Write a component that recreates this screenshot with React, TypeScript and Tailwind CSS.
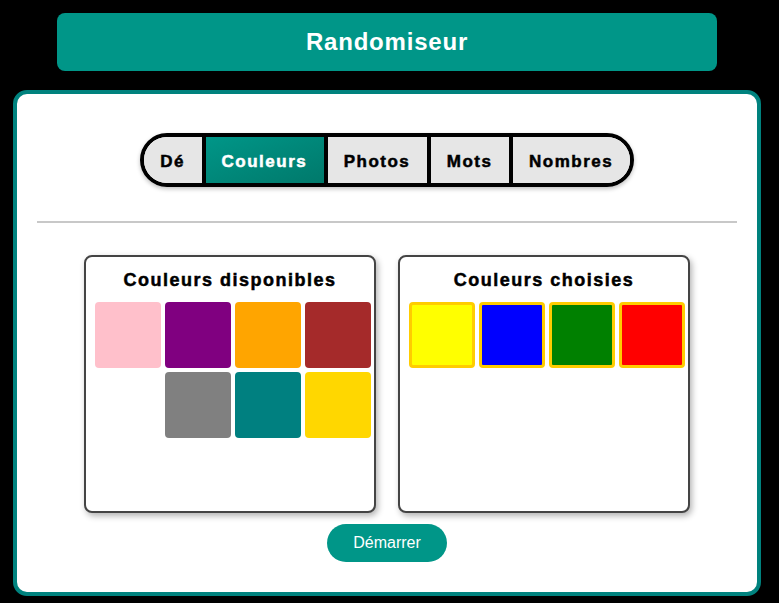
import { useState } from 'react';

const tabs = ['Dé', 'Couleurs', 'Photos', 'Mots', 'Nombres'];

const available: (string | null)[] = [
  '#ffc0cb', '#800080', '#ffa500', '#a52a2a',
  null, '#808080', '#008080', '#ffd700',
];

const chosen = ['#ffff00', '#0000ff', '#008000', '#ff0000'];

export default function App() {
  const [active, setActive] = useState('Couleurs');

  return (
    <div className="min-h-screen bg-black pt-[13px]" style={{ fontFamily: '"Liberation Sans", Arial, sans-serif' }}>
      <div className="ml-[13px] w-[748px]">
        {/* Header */}
        <div className="mx-[44px] h-[58px] rounded-lg bg-[#009688] flex items-center justify-center">
          <h1 className="text-white font-bold text-[24px] tracking-[0.8px]">Randomiseur</h1>
        </div>

        {/* Main card */}
        <div className="mt-[19px] bg-white border-4 border-[#00827e] rounded-[14px] pt-[39px] pb-[30px] flex flex-col items-center">
          {/* Tabs */}
          <div className="flex border-4 border-black rounded-full overflow-hidden shadow-[0_2px_4px_rgba(0,0,0,0.25)]">
            {tabs.map((t, i) => (
              <button
                key={t}
                onClick={() => setActive(t)}
                className={`h-[46px] pl-[16px] pr-[16.5px] pt-[3px] flex items-center font-bold text-[17px] tracking-[1.5px] [-webkit-text-stroke:0.5px_currentColor] ${i > 0 ? 'border-l-4 border-black' : ''} ${
                  active === t
                    ? 'bg-gradient-to-br from-[#009688] to-[#00796b] text-white'
                    : 'bg-[#e6e6e6] text-black'
                }`}
              >
                {t}
              </button>
            ))}
          </div>

          <div className="self-stretch mx-5 mt-[34px] h-[2px] bg-[#c8c8c8]" />

          {/* Panels */}
          <div className="mt-[32px] flex gap-[22px]">
            <div className="w-[292px] h-[258px] border-2 border-[#444] rounded-lg bg-white shadow-[2px_3px_6px_rgba(0,0,0,0.3)] pt-[11px] pl-[9px]">
              <h3 className="text-center pr-[9px] font-bold text-[18px] leading-[24px] tracking-[1.5px] [-webkit-text-stroke:0.5px_black] text-black mb-[10px]">
                Couleurs disponibles
              </h3>
              <div className="grid grid-cols-[repeat(4,66px)] gap-[4px]">
                {available.map((c, i) =>
                  c ? (
                    <div key={i} className="w-[66px] h-[66px] rounded" style={{ backgroundColor: c }} />
                  ) : (
                    <div key={i} className="w-[66px] h-[66px]" />
                  )
                )}
              </div>
            </div>

            <div className="w-[292px] h-[258px] border-2 border-[#444] rounded-lg bg-white shadow-[2px_3px_6px_rgba(0,0,0,0.3)] pt-[11px] pl-[9px]">
              <h3 className="text-center pr-[9px] font-bold text-[18px] leading-[24px] tracking-[1.5px] [-webkit-text-stroke:0.5px_black] text-black mb-[10px]">
                Couleurs choisies
              </h3>
              <div className="grid grid-cols-[repeat(4,66px)] gap-[4px]">
                {chosen.map((c) => (
                  <div
                    key={c}
                    className="w-[66px] h-[66px] rounded border-[3px] border-[#ffcc00]"
                    style={{ backgroundColor: c }}
                  />
                ))}
              </div>
            </div>
          </div>

          {/* Start */}
          <button className="mt-[11px] h-[38px] px-[26px] rounded-full bg-[#009688] text-white text-[16px]">
            Démarrer
          </button>
        </div>
      </div>
    </div>
  );
}
